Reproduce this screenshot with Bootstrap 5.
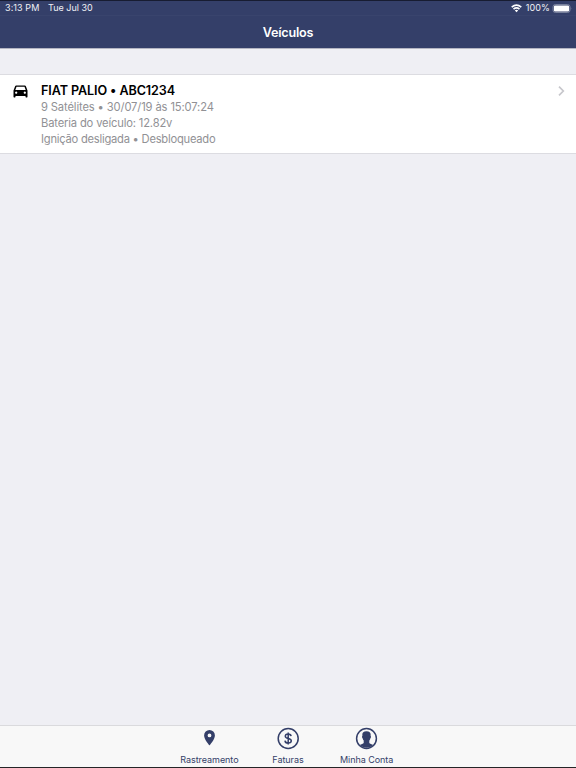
<!DOCTYPE html>
<html lang="pt-BR">
<head>
<meta charset="utf-8">
<meta name="viewport" content="width=device-width, initial-scale=1">
<title>Veículos</title>
<link href="https://cdn.jsdelivr.net/npm/bootstrap@5.3.0/dist/css/bootstrap.min.css" rel="stylesheet">
<style>
body{font-family:Inter,"Liberation Sans",sans-serif;background:#efeff4;height:100vh;overflow:hidden}
svg{display:block;flex:none}
.app-header{background:#343f69;height:49px;border-top:1px solid #171c31;border-bottom:1px solid #b4b5c2;color:#fff}
.status{height:15px;font-size:9px;line-height:14px;padding:0 4px 0 5px;border-bottom:1px solid #39446d;color:#f0f1f5}
.status-time{width:43px;letter-spacing:.08px}
.battery-label{letter-spacing:.08px}
.screen-title{font-size:12.6px;line-height:33px;font-weight:600;letter-spacing:-.22px}
.vehicles{margin-top:25px;border-top:1px solid #dcdce1;border-bottom:1px solid #dcdce1;height:80px}
.vehicle{padding:8px 11px 0 13px;background:#fff}
.vehicle-name{font-size:12.6px;line-height:16px;font-weight:600;color:#000;letter-spacing:-.1px}
.vehicle-info{font-size:11.2px;line-height:16px;color:#919195;letter-spacing:-.13px}
.vehicle-battery{letter-spacing:-.16px}
.vehicle-state{letter-spacing:-.24px}
.vehicle-text{margin-left:13px}
.tabs{height:43px;background:#f8f8f8;border-top:1px solid #dadadd;border-bottom:1px solid #252527;color:#343f69}
.tab-item{width:78.6px;color:#343f69;font-size:9px;line-height:12px;padding-top:1px;letter-spacing:-.05px}
.tab-item:hover{color:#343f69}
.tab-icon{height:23px;margin-bottom:4px}
</style>
<script src="https://cdn.jsdelivr.net/npm/bootstrap@5.3.0/dist/js/bootstrap.bundle.min.js"></script>
</head>
<body class="d-flex flex-column">
<header class="app-header flex-shrink-0">
  <div class="status d-flex align-items-center">
    <span class="status-time">3:13 PM</span><span>Tue Jul 30</span>
    <svg class="ms-auto" width="11" height="9" viewBox="0 0 11 9" fill="none" stroke="#fff" stroke-width="1.6"><path d="M.7 3.2Q5.5-1 10.3 3.2M2.5 5.2Q5.5 2.7 8.5 5.2"/><path d="M3.8 6.4Q5.5 5.1 7.2 6.4L5.5 8.3Z" fill="#fff" stroke="none"/></svg>
    <span class="battery-label ms-1">100%</span>
    <svg width="22" height="9" viewBox="-2.5 0 22 9"><rect x=".5" y=".5" width="17" height="8" rx="2.3" fill="none" stroke="#8990aa" stroke-width=".8"/><rect x="1.4" y="1.4" width="15.2" height="6.2" rx="1.3" fill="#fff"/><path d="M18.3 3q1 1.5 0 3z" fill="#8990aa"/></svg>
  </div>
  <h1 class="screen-title text-center mb-0">Veículos</h1>
</header>
<main class="flex-grow-1">
  <div class="vehicles list-group list-group-flush">
    <a href="#" class="vehicle d-flex text-decoration-none h-100">
      <svg width="15" height="17" viewBox="0 -.5 15 17"><path fill="#000" fill-rule="evenodd" d="M3.2 2h8.6q.8 0 1.1.8L14.5 7v6.3q0 .6-.6.6h-.8q-.6 0-.6-.6v-.8h-10v.8q0 .6-.6.6h-.8q-.6 0-.6-.6V7l1.6-4.2q.3-.8 1.1-.8zm.3 1.3L2.3 6.5h10.4l-1.2-3.2zM3.200 8a1.100 1.100 0 1 0 .01 0zm8.600 0a1.100 1.100 0 1 0 .01 0z"/></svg>
      <div class="vehicle-text flex-grow-1">
        <div class="vehicle-name">FIAT PALIO • ABC1234</div>
        <div class="vehicle-info">9 Satélites • 30/07/19 às 15:07:24</div>
        <div class="vehicle-info vehicle-battery">Bateria do veículo: 12.82v</div>
        <div class="vehicle-info vehicle-state">Ignição desligada • Desbloqueado</div>
      </div>
      <svg class="chevron" width="7" height="16" viewBox="0 0 7 16"><path d="M1 3.700 5.300 8 1 12.300" fill="none" stroke="#c7c7cc" stroke-width="1.700"/></svg>
    </a>
  </div>
</main>
<nav class="tabs d-flex justify-content-center flex-shrink-0">
  <a href="#" class="tab-item d-flex flex-column align-items-center text-decoration-none">
    <svg class="tab-icon" width="23" height="23" viewBox="0 0 23 23"><path fill="#343f69" fill-rule="evenodd" d="M11.500 3a5.400 5.400 0 0 0-5.400 5.400c0 4 5.400 9.900 5.400 9.900s5.400-5.900 5.400-9.900A5.400 5.400 0 0 0 11.500 3zm0 3.500a1.900 1.900 0 1 1 0 3.800 1.900 1.900 0 0 1 0-3.800z"/></svg>
    <span>Rastreamento</span>
  </a>
  <a href="#" class="tab-item d-flex flex-column align-items-center text-decoration-none">
    <svg class="tab-icon" width="23" height="23" viewBox="0 0 23 23" fill="none" stroke="#343f69" stroke-width="1.500"><circle cx="11.200" cy="11.500" r="10"/><path d="M14.100 9.200C13.900 7.700 12.700 7 11.200 7 9.500 7 8.300 7.800 8.300 9.200c0 3.100 6 1.500 6 4.600 0 1.500-1.300 2.300-3.100 2.300-1.900 0-3.100-.9-3.200-2.500M11.200 5.500v12"/></svg>
    <span>Faturas</span>
  </a>
  <a href="#" class="tab-item d-flex flex-column align-items-center text-decoration-none">
    <svg class="tab-icon" width="23" height="23" viewBox="0 0 23 23"><circle cx="11.500" cy="11.500" r="9.900" fill="none" stroke="#343f69" stroke-width="1.500"/><path fill="#343f69" d="M11.500 4.300c3.400 0 4.500 1.700 4.100 4.600.7.2.4 2-.3 2.500-.2 1.100-.6 1.700-1 2.200v2.400c.5 1 2.400 1.100 4 2.100a9.800 9.800 0 0 1-13.600 0c1.600-1 3.500-1.100 4-2.100v-2.400c-.4-.5-.8-1.100-1-2.200-.7-.5-1-2.300-.3-2.500-.4-2.900.7-4.600 4.100-4.600z"/></svg>
    <span>Minha Conta</span>
  </a>
</nav>
</body>
</html>
